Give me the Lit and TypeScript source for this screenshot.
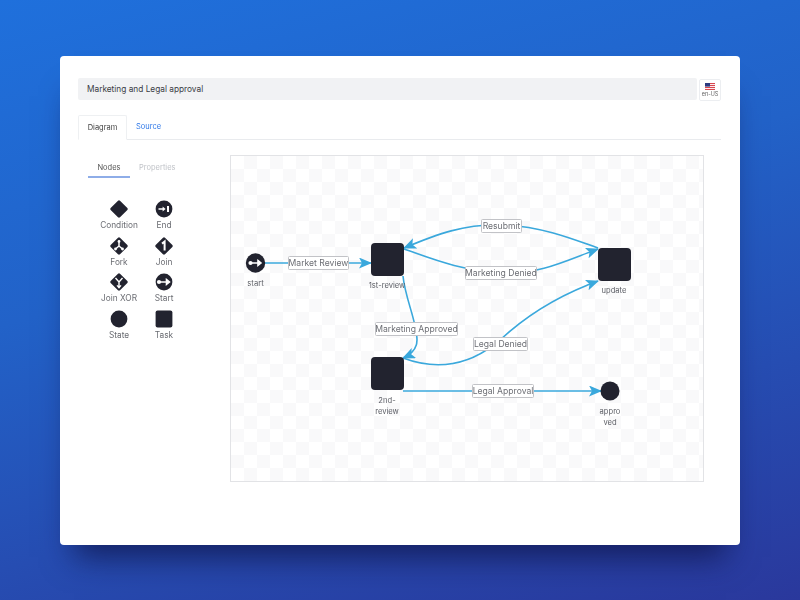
import {LitElement, html, css, svg} from 'lit';
import {customElement} from 'lit/decorators.js';

const INK = '#22232f';
const EDGE = '#3aa8dc';

const palette = [
  ['condition', 'Condition'],
  ['end', 'End'],
  ['fork', 'Fork'],
  ['join', 'Join'],
  ['xor', 'Join XOR'],
  ['start', 'Start'],
  ['state', 'State'],
  ['task', 'Task'],
];

const diamond = svg`<rect x="3.4" y="3.4" width="13.2" height="13.2" rx="1.4" transform="rotate(45 10 10)" fill=${INK}></rect>`;
const disc = svg`<circle cx="10" cy="10" r="8.4" fill=${INK}></circle>`;
const startMark = svg`<path d="M4.5 10h10M12.4 7.4 15.6 10l-3.2 2.6Z" fill="#fff" stroke="#fff" stroke-width="1.4"></path><circle cx="5" cy="10" r="2.1" fill="#fff"></circle>`;

function glyph(kind: string) {
  switch (kind) {
    case 'condition':
      return diamond;
    case 'end':
      return svg`${disc}<path d="M4.5 10h5" stroke="#fff" stroke-width="1.5"></path><path d="M8.6 7.6 11.6 10l-3 2.4Z" fill="#fff"></path><path d="M14 7v6" stroke="#fff" stroke-width="2"></path>`;
    case 'fork':
      return svg`${diamond}<path d="M10 5v5M10 10 6.5 13M10 10l3.5 3" fill="none" stroke="#fff" stroke-width="1.5"></path><circle cx="10" cy="5.4" r="1.4" fill="#fff"></circle><circle cx="6.5" cy="13" r="1.4" fill="#fff"></circle><circle cx="13.5" cy="13" r="1.4" fill="#fff"></circle>`;
    case 'join':
      return svg`${diamond}<path d="M8 7.6 10.6 5.6V14.4" fill="none" stroke="#fff" stroke-width="2"></path>`;
    case 'xor':
      return svg`${diamond}<path d="M6.5 6 10 10l3.5-4M10 10v5.5M8 13.4l2 2.2 2-2.2" fill="none" stroke="#fff" stroke-width="1.4"></path>`;
    case 'start':
      return svg`${disc}${startMark}`;
    case 'state':
      return disc;
    default:
      return svg`<rect x="1.6" y="1.6" width="16.8" height="16.8" rx="2" fill=${INK}></rect>`;
  }
}

type Label = {text: string; x: number; y: number; w: number};

const edgeLabels: Label[] = [
  {text: 'Market Review', x: 288, y: 256, w: 60},
  {text: 'Resubmit', x: 481, y: 219, w: 40},
  {text: 'Marketing Denied', x: 465, y: 266, w: 71},
  {text: 'Marketing Approved', x: 375, y: 322, w: 82},
  {text: 'Legal Denied', x: 473, y: 337, w: 54},
  {text: 'Legal Approval', x: 472, y: 384, w: 61},
];

const edges = [
  'M265 263H371',
  'M598 248C565 236 540 227 505 225C465 223 435 235 404 248',
  'M404 249C430 258 460 271 505 273C540 274 565 261 598 249',
  'M403 276C405 298 417 322 417 340C417 349 412 354 403 358',
  'M403 358C430 368 465 370 500 340C530 312 565 293 598 281',
  'M403 391H601',
];

const captions: [string, number, number][] = [
  ['start', 255.5, 286],
  ['1st-review', 387, 288],
  ['update', 614, 293],
  ['2nd-', 387, 403],
  ['review', 387, 414],
  ['appro', 610, 414],
  ['ved', 610, 425],
];

@customElement('app-root')
export class AppRoot extends LitElement {
  static styles = css`
    :host {
      display: block;
      box-sizing: border-box;
      width: 800px;
      height: 600px;
      padding: 56px 60px 55px;
      background: linear-gradient(165deg, #1f70dc 0%, #2262c8 40%, #2a389c 100%);
      font-family: Inter, 'Noto Sans', sans-serif;
      overflow: hidden;
    }

    .card {
      height: 489px;
      background: #fff;
      border-radius: 4px;
      box-shadow: 0 26px 30px -14px rgba(14, 18, 70, 0.75);
    }

    /* the reference is a soft, slightly scaled-down capture */
    .content {
      box-sizing: border-box;
      height: 100%;
      padding: 22px 19px 0 18px;
      filter: blur(0.45px);
    }

    .header {
      display: flex;
      gap: 2px;
      align-items: flex-start;
    }

    .title {
      flex: 1;
      height: 22px;
      padding-left: 9px;
      border-radius: 2px;
      background: #f1f2f4;
      color: #3a3d44;
      font-size: 8.3px;
      line-height: 22px;
    }

    .locale {
      box-sizing: border-box;
      width: 22px;
      height: 22px;
      margin-top: 1px;
      border: 1px solid #eceef1;
      border-radius: 2px;
      display: flex;
      flex-direction: column;
      align-items: center;
      padding-top: 3px;
      color: #666;
      font-size: 5.5px;
      line-height: 7px;
    }

    .locale svg {
      display: block;
      margin-bottom: 1px;
    }

    .tabs {
      display: flex;
      margin-top: 14px;
      height: 24px;
      border-bottom: 1px solid #e9ebee;
    }

    .tab {
      box-sizing: border-box;
      width: 49px;
      height: 25px;
      border: 1px solid #eef0f2;
      border-bottom-color: #fff;
      border-radius: 2px 2px 0 0;
      text-align: center;
      color: #444;
      font-size: 7.5px;
      line-height: 24px;
    }

    .link {
      margin-left: 9px;
      color: #2f78e8;
      font-size: 7.5px;
      line-height: 24px;
    }

    .body {
      display: flex;
      margin-top: 15px;
    }

    .side {
      width: 152px;
      flex: none;
    }

    .subtabs {
      display: flex;
      margin: 6px 0 0 10px;
      height: 17px;
      font-size: 7.5px;
      line-height: 13px;
      color: #c0c3c8;
    }

    .subtab {
      box-sizing: border-box;
      width: 42px;
      height: 17px;
      text-align: center;
      color: #555;
      border-bottom: 2px solid #8eade8;
    }

    .subtab + span {
      margin-left: 9px;
    }

    .palette {
      display: grid;
      grid-template-columns: 45px 45px;
      grid-auto-rows: 36.6px;
      margin: 21px 0 0 18.5px;
    }

    .item {
      display: flex;
      flex-direction: column;
      align-items: center;
      color: #6a6c72;
      font-size: 8.3px;
      line-height: 11px;
      white-space: nowrap;
    }

    .item svg {
      display: block;
      flex: none;
      margin-bottom: 1px;
    }

    .canvas {
      box-sizing: border-box;
      width: 474px;
      height: 327px;
      border: 1px solid #e2e3e6;
      background-color: #fff;
      background-image: conic-gradient(#f9f9fa 25%, #fff 0 50%, #f9f9fa 0 75%, #fff 0);
      background-size: 26px 26px;
    }

    .canvas svg {
      display: block;
    }

    .caption {
      fill: #5d5f66;
      font-size: 7.6px;
      text-anchor: middle;
    }

    .edge-text {
      fill: #6c6e74;
      font-size: 8.6px;
      text-anchor: middle;
    }

    .edge-box {
      fill: #fff;
      stroke: #c2c3c7;
      stroke-width: 1;
    }
  `;

  private diagram() {
    return html`<svg width="472" height="325" viewBox="231 156 472 325">
      <defs>
        <marker id="head" viewBox="0 0 13 11" refX="12" refY="5.5" markerWidth="13" markerHeight="11" markerUnits="userSpaceOnUse" orient="auto">
          <path d="M0 0 13 5.5 0 11 3 5.5Z" fill=${EDGE}></path>
        </marker>
      </defs>
      ${edges.map(
        (d) => svg`<path d=${d} fill="none" stroke=${EDGE} stroke-width="1.6" marker-end="url(#head)"></path>`
      )}
      <rect x="371" y="243" width="33" height="33" rx="4" fill=${INK}></rect>
      <rect x="598" y="248" width="33" height="33" rx="4" fill=${INK}></rect>
      <rect x="371" y="357" width="33" height="33" rx="4" fill=${INK}></rect>
      <circle cx="610" cy="391" r="9.5" fill=${INK}></circle>
      <g transform="translate(245.5 253)">
        <circle cx="10" cy="10" r="9.7" fill=${INK}></circle>
        ${startMark}
      </g>
      ${edgeLabels.map(
        (l) => svg`<rect class="edge-box" x=${l.x + 0.5} y=${l.y + 0.5} width=${l.w} height="13" rx="1"></rect>
          <text class="edge-text" x=${l.x + l.w / 2 + 0.5} y=${l.y + 10}>${l.text}</text>`
      )}
      ${captions.map(
        ([t, x, y]) => svg`<text class="caption" x=${x} y=${y}>${t}</text>`
      )}
    </svg>`;
  }

  render() {
    return html`
      <div class="card">
        <div class="content">
          <div class="header">
            <div class="title">Marketing and Legal approval</div>
            <div class="locale">
              <svg width="10" height="7" viewBox="0 0 10 7">
                <rect width="10" height="7" fill="#d8474f"></rect>
                <path d="M0 1.5h10M0 3.5h10M0 5.5h10" stroke="#fff" stroke-width="0.9"></path>
                <rect width="5" height="3.6" fill="#2c3a80"></rect>
              </svg>
              en-US
            </div>
          </div>
          <div class="tabs">
            <div class="tab">Diagram</div>
            <div class="link">Source</div>
          </div>
          <div class="body">
            <div class="side">
              <div class="subtabs">
                <div class="subtab">Nodes</div>
                <span>Properties</span>
              </div>
              <div class="palette">
                ${palette.map(
                  ([kind, name]) => html`<div class="item">
                    <svg width="20" height="20" viewBox="0 0 20 20">${glyph(kind)}</svg>
                    ${name}
                  </div>`
                )}
              </div>
            </div>
            <div class="canvas">${this.diagram()}</div>
          </div>
        </div>
      </div>
    `;
  }
}
